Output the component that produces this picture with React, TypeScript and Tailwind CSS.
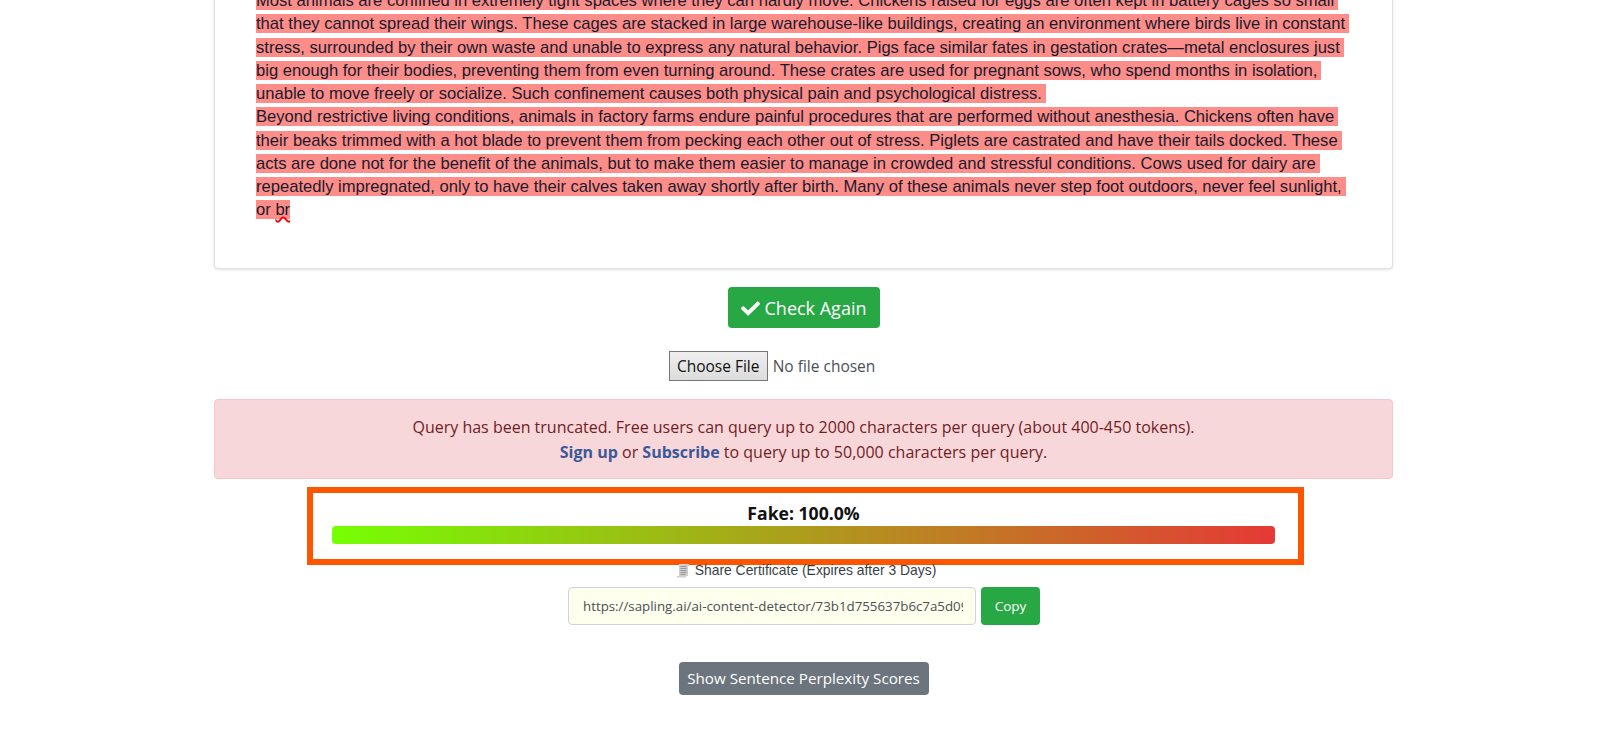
import { FaCheck } from "react-icons/fa";

const LINES = [
  "Most animals are confined in extremely tight spaces where they can hardly move. Chickens raised for eggs are often kept in battery cages so small",
  "that they cannot spread their wings. These cages are stacked in large warehouse-like buildings, creating an environment where birds live in constant",
  "stress, surrounded by their own waste and unable to express any natural behavior. Pigs face similar fates in gestation crates—metal enclosures just",
  "big enough for their bodies, preventing them from even turning around. These crates are used for pregnant sows, who spend months in isolation,",
  "unable to move freely or socialize. Such confinement causes both physical pain and psychological distress.",
  "Beyond restrictive living conditions, animals in factory farms endure painful procedures that are performed without anesthesia. Chickens often have",
  "their beaks trimmed with a hot blade to prevent them from pecking each other out of stress. Piglets are castrated and have their tails docked. These",
  "acts are done not for the benefit of the animals, but to make them easier to manage in crowded and stressful conditions. Cows used for dairy are",
  "repeatedly impregnated, only to have their calves taken away shortly after birth. Many of these animals never step foot outdoors, never feel sunlight,",
];

const App = () => {
  return (
    <div className="h-[750px] overflow-hidden bg-white pl-[7px] font-['Open_Sans',sans-serif] text-[16px] text-[#212529]">
      <div className="mx-auto w-[1179px]">
        {/* Text card, scrolled partly off the top */}
        <div className="mt-[-12px] h-[281px] rounded-b-[4px] border border-[#e3e3e3] bg-white pl-[41px] font-['Liberation_Sans',sans-serif] text-[16.6px] leading-[23.25px] text-[#1a1a2e] shadow-[0_1px_3px_rgba(0,0,0,0.12)]">
          {LINES.map((line) => (
            <div key={line} className="whitespace-nowrap">
              <span className="bg-[#fc8d88] pr-[4px]">{line}</span>
            </div>
          ))}
          <div>
            <span className="bg-[#fc8d88]">
              or <span className="underline decoration-[#f00] decoration-wavy decoration-[1.5px] underline-offset-[1px]">br</span>
            </span>
          </div>
        </div>

        <div className="mt-[18px] flex justify-center">
          <button className="flex h-[41px] w-[152px] items-center justify-center gap-[5px] rounded-[4px] bg-[#28a745] pt-[1px] text-[18px] text-white">
            <FaCheck size={19} />
            Check Again
          </button>
        </div>

        <div className="mt-[23px] flex justify-center pr-[63px]">
          <div className="flex items-center gap-[5px]">
            <button className="h-[30px] w-[99px] border border-[#767676] bg-linear-to-b/srgb from-[#efefef] to-[#dcdcdc] pt-[1px] text-[15.5px] text-[#111]">
              Choose File
            </button>
            <span className="pt-[1px] text-[15.5px] text-[#495057]">No file chosen</span>
          </div>
        </div>

        <div className="mt-[18px] flex h-[80px] flex-col items-center justify-center rounded-[4px] border border-[#f5c6cb] bg-[#f8d7da] pt-[2px] leading-[25.5px] text-[#721c24]">
          <div>Query has been truncated. Free users can query up to 2000 characters per query (about 400-450 tokens).</div>
          <div>
            <b className="text-[#3b5998]">Sign up</b> or <b className="text-[#3b5998]">Subscribe</b> to query up to 50,000 characters per query.
          </div>
        </div>

        {/* Score bar */}
        <div className="mt-[8px] ml-[93px] h-[78px] w-[997px] border-[6px] border-[#ff5500] pt-[8px] pr-[23px] pl-[19px]">
          <div className="text-center text-[17.6px] leading-[25px] font-bold text-[#111]">Fake: 100.0%</div>
          <div className="h-[18px] rounded-[4px] bg-linear-to-r/srgb from-[#76ff03] to-[#e53935]" />
        </div>

        <div className="mt-[-2px] flex h-[15px] items-center justify-center gap-[5px] pl-[5px] font-['Liberation_Sans',sans-serif] text-[13.9px] text-[#3a3f45]">
          <svg width="14" height="15" viewBox="0 0 14 15">
            <path d="M3 1h10v2h-1v10h-2v1.500H1V13h2V1z" fill="#cfcfcf" />
            <path d="M4.500 3.500h6M4.500 5.500h6M4.500 7.500h6M4.500 9.500h6M4.500 11.500h5" stroke="#989898" strokeWidth="1" />
          </svg>
          <span>Share Certificate (Expires after 3 Days)</span>
        </div>

        <div className="mt-[9px] flex justify-center gap-[5px] pl-[1px]">
          <input
            readOnly
            value="https://sapling.ai/ai-content-detector/73b1d755637b6c7a5d09f2e84c1a"
            className="h-[38px] w-[408px] rounded-[4px] border border-[#ced4da] bg-[#ffffee] pr-[12px] pl-[14px] text-[13.3px] text-[#495057] outline-none"
          />
          <button className="h-[38px] w-[59px] rounded-[4px] bg-[#28a745] text-[13.5px] text-white">Copy</button>
        </div>

        <div className="mt-[37px] flex justify-center">
          <button className="h-[33px] w-[250px] rounded-[4px] bg-[#6c757d] text-[15.2px] text-white">
            Show Sentence Perplexity Scores
          </button>
        </div>
      </div>
    </div>
  );
};

export default App;
